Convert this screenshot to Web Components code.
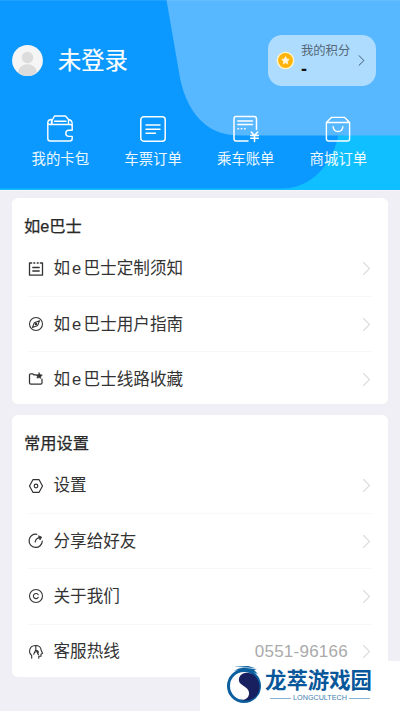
<!DOCTYPE html>
<html lang="zh-CN">
<head>
<meta charset="utf-8">
<title>我的</title>
<style>
html,body{margin:0;height:100%;overflow:hidden}
body{background:#f0eff5;font-family:"Liberation Sans","Noto Sans CJK SC",sans-serif;color:#333}
</style>
</head>
<body>
<profile-page></profile-page>
<script>
const svg = (w, h, body, sw = 1) => `<svg width="${w}" height="${h}" viewBox="0 0 ${w} ${h}" fill="none" stroke="currentColor" stroke-width="${sw}" stroke-linecap="round" stroke-linejoin="round">${body}</svg>`;
const icons = {
  wallet: svg(28, 28, '<path d="M26.2 15V11.5Q26.2 9.5 24 9.5H4Q1.8 9.5 1.8 7.3V23.5Q1.8 26 4.3 26H23.7Q26.2 26 26.2 23.5V22.5M1.8 8Q1.8 4.5 5.5 4.5V9M22.5 4.5Q26.2 5 26.2 9V12M6 9V5.5L8.5 1H19.5L22.5 4.5V9M8.5 6.3H20M26.2 15.2H22.8Q19.8 15.2 19.8 18.3T22.8 21.4H26.2"/>', 1.4),
  ticket: svg(28, 28, '<rect x="1.8" y="1.8" width="24.4" height="24.4" rx="3"/><path d="M7 10H21M7 14.2H21M7 18.2H16.5"/>', 1.5),
  bill: svg(28, 28, '<path d="M24.5 14.5V4Q24.5 1.6 22.3 1.6H4Q2 1.6 2 3.8V23.7Q2 26 4.3 26H16M5.8 5.9H20.5M5.8 9.5H20.5M6 13.8H6.5M9.3 13.8H9.8M12.6 13.8H13.1"/><path d="M19.3 17L22.5 20.5L25.7 17M18.7 20.5H26.3M18.7 23.2H26.3M22.5 20.5V26.5"/>', 1.5),
  bag: svg(28, 28, '<path d="M2.4 7.5L7.4 2.4H20.7L25.6 7.5V23.8Q25.6 26 23.4 26H4.6Q2.4 26 2.4 23.8ZM2.4 7.5H25.6M9.2 11.7Q9.5 16.5 14 16.5T18.8 11.7"/>', 1.4),
  note: svg(16, 16, '<path d="M3.7 2H1.5V14.2H14.5V2H12.3M5.8 2H6.8M9.2 2H10.2M4.8 6.5H11.2M4.8 10H11.2"/>', 1.3),
  compass: svg(16, 16, '<circle cx="8" cy="8" r="6.5"/><path d="M11.5 4.7L9.7 9.4L4.5 11.4L6.3 6.7Z"/><circle cx="8" cy="8" r=".7"/>', 1.1),
  folder: svg(16, 16, '<path d="M8 3.9H6L4.6 2.8H2.7Q1.5 2.8 1.5 4V11.7Q1.5 13 2.8 13H12.7Q14 13 14 11.7V8"/><path d="M11.2 1.7L12 3.5L14.4 4.1L12.8 5.5L12.8 7.5L11 6.6L8.9 7.2L9.3 5.3L7.9 3.9L10.2 3.6Z" fill="currentColor" stroke-width=".5"/>', 1.25),
  hex: svg(16, 16, '<path d="M4.9 1.7H11.1L14.5 8L11.1 14.3H4.9L1.5 8Z"/><circle cx="8" cy="8" r="1.8"/>', 1.2),
  share: svg(16, 16, '<path d="M8.7 1.3A6.6 6.6 0 1 0 14.3 8M7.2 9Q7.5 5 12.8 4.3"/><path d="M10.8 2.9L13.6 4.1L12.2 6.6Z" fill="currentColor" stroke-width=".8"/>', 1.2),
  copy: svg(16, 16, '<circle cx="8" cy="8" r="6.5"/><path d="M10.2 6.7A2.6 2.6 0 1 0 10.2 9.4"/>', 1.1),
  head: svg(16, 16, '<path d="M3.7 14.3V11.5Q1.5 10 1.5 7.2Q2 1.5 7.7 1.5Q12.8 1.5 13.2 6.5L14.6 9.2L13 10.2V12.2H10.8V14.3M7.8 1.8V5.8L5.7 10.2M7.8 5.8L10.5 10.7M7 8.5A1.7 1.7 0 1 1 9.6 9.6"/>', 1.1)
};
function define(name, build) {
  customElements.define(name, class extends HTMLElement {
    constructor() { super(); this.attachShadow({ mode: 'open' }); }
    connectedCallback() { this.shadowRoot.innerHTML = build(this); }
  });
}
define('ui-icon', el => `<style>:host{display:block;flex:none;line-height:0}svg{display:block}</style>${icons[el.getAttribute('name')]}`);
define('ui-chevron', () => `<style>:host{display:block;flex:none}svg{display:block}</style>${svg(9, 15, '<path d="M1.5 1.5L7.5 7.5L1.5 13.5"/>', 1.1)}`);
define('nav-item', el => `<style>:host{display:flex;flex-direction:column;align-items:center;width:92.7px;color:#fff}
span{font-size:14.4px;line-height:20px;margin-top:6px;white-space:nowrap;opacity:.93}</style><ui-icon name="${el.getAttribute('icon')}"></ui-icon><span><slot></slot></span>`);
define('points-pill', () => `<style>:host{display:flex;box-sizing:border-box;align-items:center;width:108.5px;height:50.5px;border-radius:14px;background:#addcff;padding:0 10px 0 8.5px}
.t{width:56px;margin-left:6px;font-size:12.3px;line-height:18px;color:#566776;white-space:nowrap}b{display:block;color:#111;font-size:18px;line-height:18px;height:18px;margin-top:0}ui-chevron{color:#344656;margin-left:2px;transform:scale(.8)}svg{flex:none}</style>
<svg width="19" height="19" viewBox="0 0 20 20"><circle cx="10" cy="10" r="9.3" fill="#fff4ca"/><circle cx="10" cy="10" r="7.8" fill="#ffb40b"/><path d="M10 5.8L11.3 8.4L14 8.8L12 10.8L12.4 13.6L10 12.3L7.6 13.6L8 10.8L6 8.8L8.7 8.4Z" fill="#fff8df" stroke="#fff8df" stroke-width=".6" stroke-linejoin="round"/></svg>
<div class="t">我的积分<b>-</b></div><ui-chevron></ui-chevron>`);
define('profile-header', () => `<style>:host{display:block;position:relative;height:189.5px;background:#10bfff;overflow:hidden}
.bg{position:absolute;inset:0}.content{position:relative;display:flex;flex-direction:column}.user{display:flex;align-items:center;height:50.5px;margin:35px 24px 0 12px}
.avatar{flex:none}h1{margin:0 0 0 15px;font-size:23.3px;line-height:34px;font-weight:400;color:#fff;flex:1;padding-top:2px;-webkit-text-stroke:.2px #fff}
nav{display:flex;margin:29px 0 0 14px}</style>
<svg class="bg" width="400" height="190" viewBox="0 0 400 190"><path d="M0 0H400L338.5 135C332 165 311 188.5 282 188.5H0Z" fill="#0b99ff"/><path d="M166.5 0L180 78Q186 108 204 123.5Q218 135.5 240 135.5H400V0Z" fill="#57b7ff"/><path d="M0 .5H400" stroke="#fff" opacity=".08"/></svg>
<div class="content"><div class="user"><svg class="avatar" width="31" height="31" viewBox="0 0 31 31"><defs><clipPath id="a"><circle cx="15.5" cy="15.5" r="15.4"/></clipPath></defs><circle cx="15.5" cy="15.5" r="15.4" fill="#f5f5f5"/><g clip-path="url(#a)" fill="#dcdcdc"><circle cx="15.5" cy="12.5" r="5.8"/><ellipse cx="15.5" cy="27.5" rx="9.5" ry="8.3"/></g></svg><h1>未登录</h1><points-pill></points-pill></div>
<nav><nav-item icon="wallet">我的卡包</nav-item><nav-item icon="ticket">车票订单</nav-item><nav-item icon="bill">乘车账单</nav-item><nav-item icon="bag">商城订单</nav-item></nav></div>`);
define('menu-card', el => `<style>:host{display:block;box-sizing:border-box;margin:0 12px;background:#fff;border-radius:6px;padding:14.5px 16px 0 12px}
h2{margin:0 0 3px;font-size:16.3px;line-height:26px;font-weight:400;color:#292929;-webkit-text-stroke:.25px #292929}</style><h2>${el.getAttribute('heading')}</h2><slot></slot>`);
define('menu-row', el => `<style>:host{display:flex;box-sizing:border-box;align-items:center;height:55.4px;margin-left:4px;border-bottom:1px solid #f8f8f8;color:#333}
:host(:last-child){border-color:transparent}
.l{margin-left:9.5px;padding-top:1px;font-size:16.6px;line-height:24px;flex:1;white-space:nowrap}.v{padding-top:1px;font-size:17px;color:#aaa;letter-spacing:.25px;margin-right:14px}ui-chevron{color:#dcdcdc;margin-right:1px}</style>
<ui-icon name="${el.getAttribute('icon')}"></ui-icon><span class="l"><slot></slot></span>${el.hasAttribute('value') ? `<span class="v">${el.getAttribute('value')}</span>` : ''}<ui-chevron></ui-chevron>`);
define('brand-mark', () => `<style>:host{position:absolute;right:0;bottom:0;width:200px;height:50px;background:#fff;display:flex;box-sizing:border-box;padding:4px 0 0 26px}
svg{flex:none}.w{margin-left:2px;width:110px;display:flex;flex-direction:column}.n{font-family:"Noto Sans CJK SC",sans-serif;font-size:21.4px;line-height:32px;height:32px;margin-top:-2px;font-weight:700;color:#07579a;white-space:nowrap}.s{display:flex;align-items:center;justify-content:center;gap:2px;font-size:7.2px;line-height:8px;color:#4281b2;margin-top:-1px}.s:before,.s:after{content:"";width:21px;height:1px;background:#86b1d1}</style>
<svg width="37" height="42" viewBox="0 0 37 42"><circle cx="18" cy="21" r="15.5" fill="#fff" stroke="#0b5f9f" stroke-width="3"/><path d="M25 8.5C18 6 12 10 13 16C14 21 24 22 23 29C22.5 34 17 36 13 34C25 39 34 31 33.5 21C33 14 29 10 25 8.5Z" fill="#19205f"/><path d="M8 6Q14 2 20 3L31 4L28 5L32 9L24 6Q16 4 8 6ZM8 1.8L22 1L29 3" fill="#0b5f9f"/></svg>
<div class="w"><div class="n">龙萃游戏园</div><div class="s">LONGCULTECH</div></div>`);
define('profile-page', () => `<style>:host{display:block;position:relative;width:400px;height:711px;background:#f0eff5;overflow:hidden}main{display:flex;flex-direction:column;gap:11px;padding-top:7.5px;border-top:1px solid #faf4f6}.one{height:206px}.two{height:262px}i{font-style:normal;margin:0 2.2px 0 2px}</style>
<profile-header></profile-header><main><menu-card class="one" heading="如e巴士"><menu-row icon="note">如<i>e</i>巴士定制须知</menu-row><menu-row icon="compass">如<i>e</i>巴士用户指南</menu-row><menu-row icon="folder">如<i>e</i>巴士线路收藏</menu-row></menu-card>
<menu-card class="two" heading="常用设置"><menu-row icon="hex">设置</menu-row><menu-row icon="share">分享给好友</menu-row><menu-row icon="copy">关于我们</menu-row><menu-row icon="head" value="0551-96166">客服热线</menu-row></menu-card></main><brand-mark></brand-mark>`);
</script>
</body>
</html>
